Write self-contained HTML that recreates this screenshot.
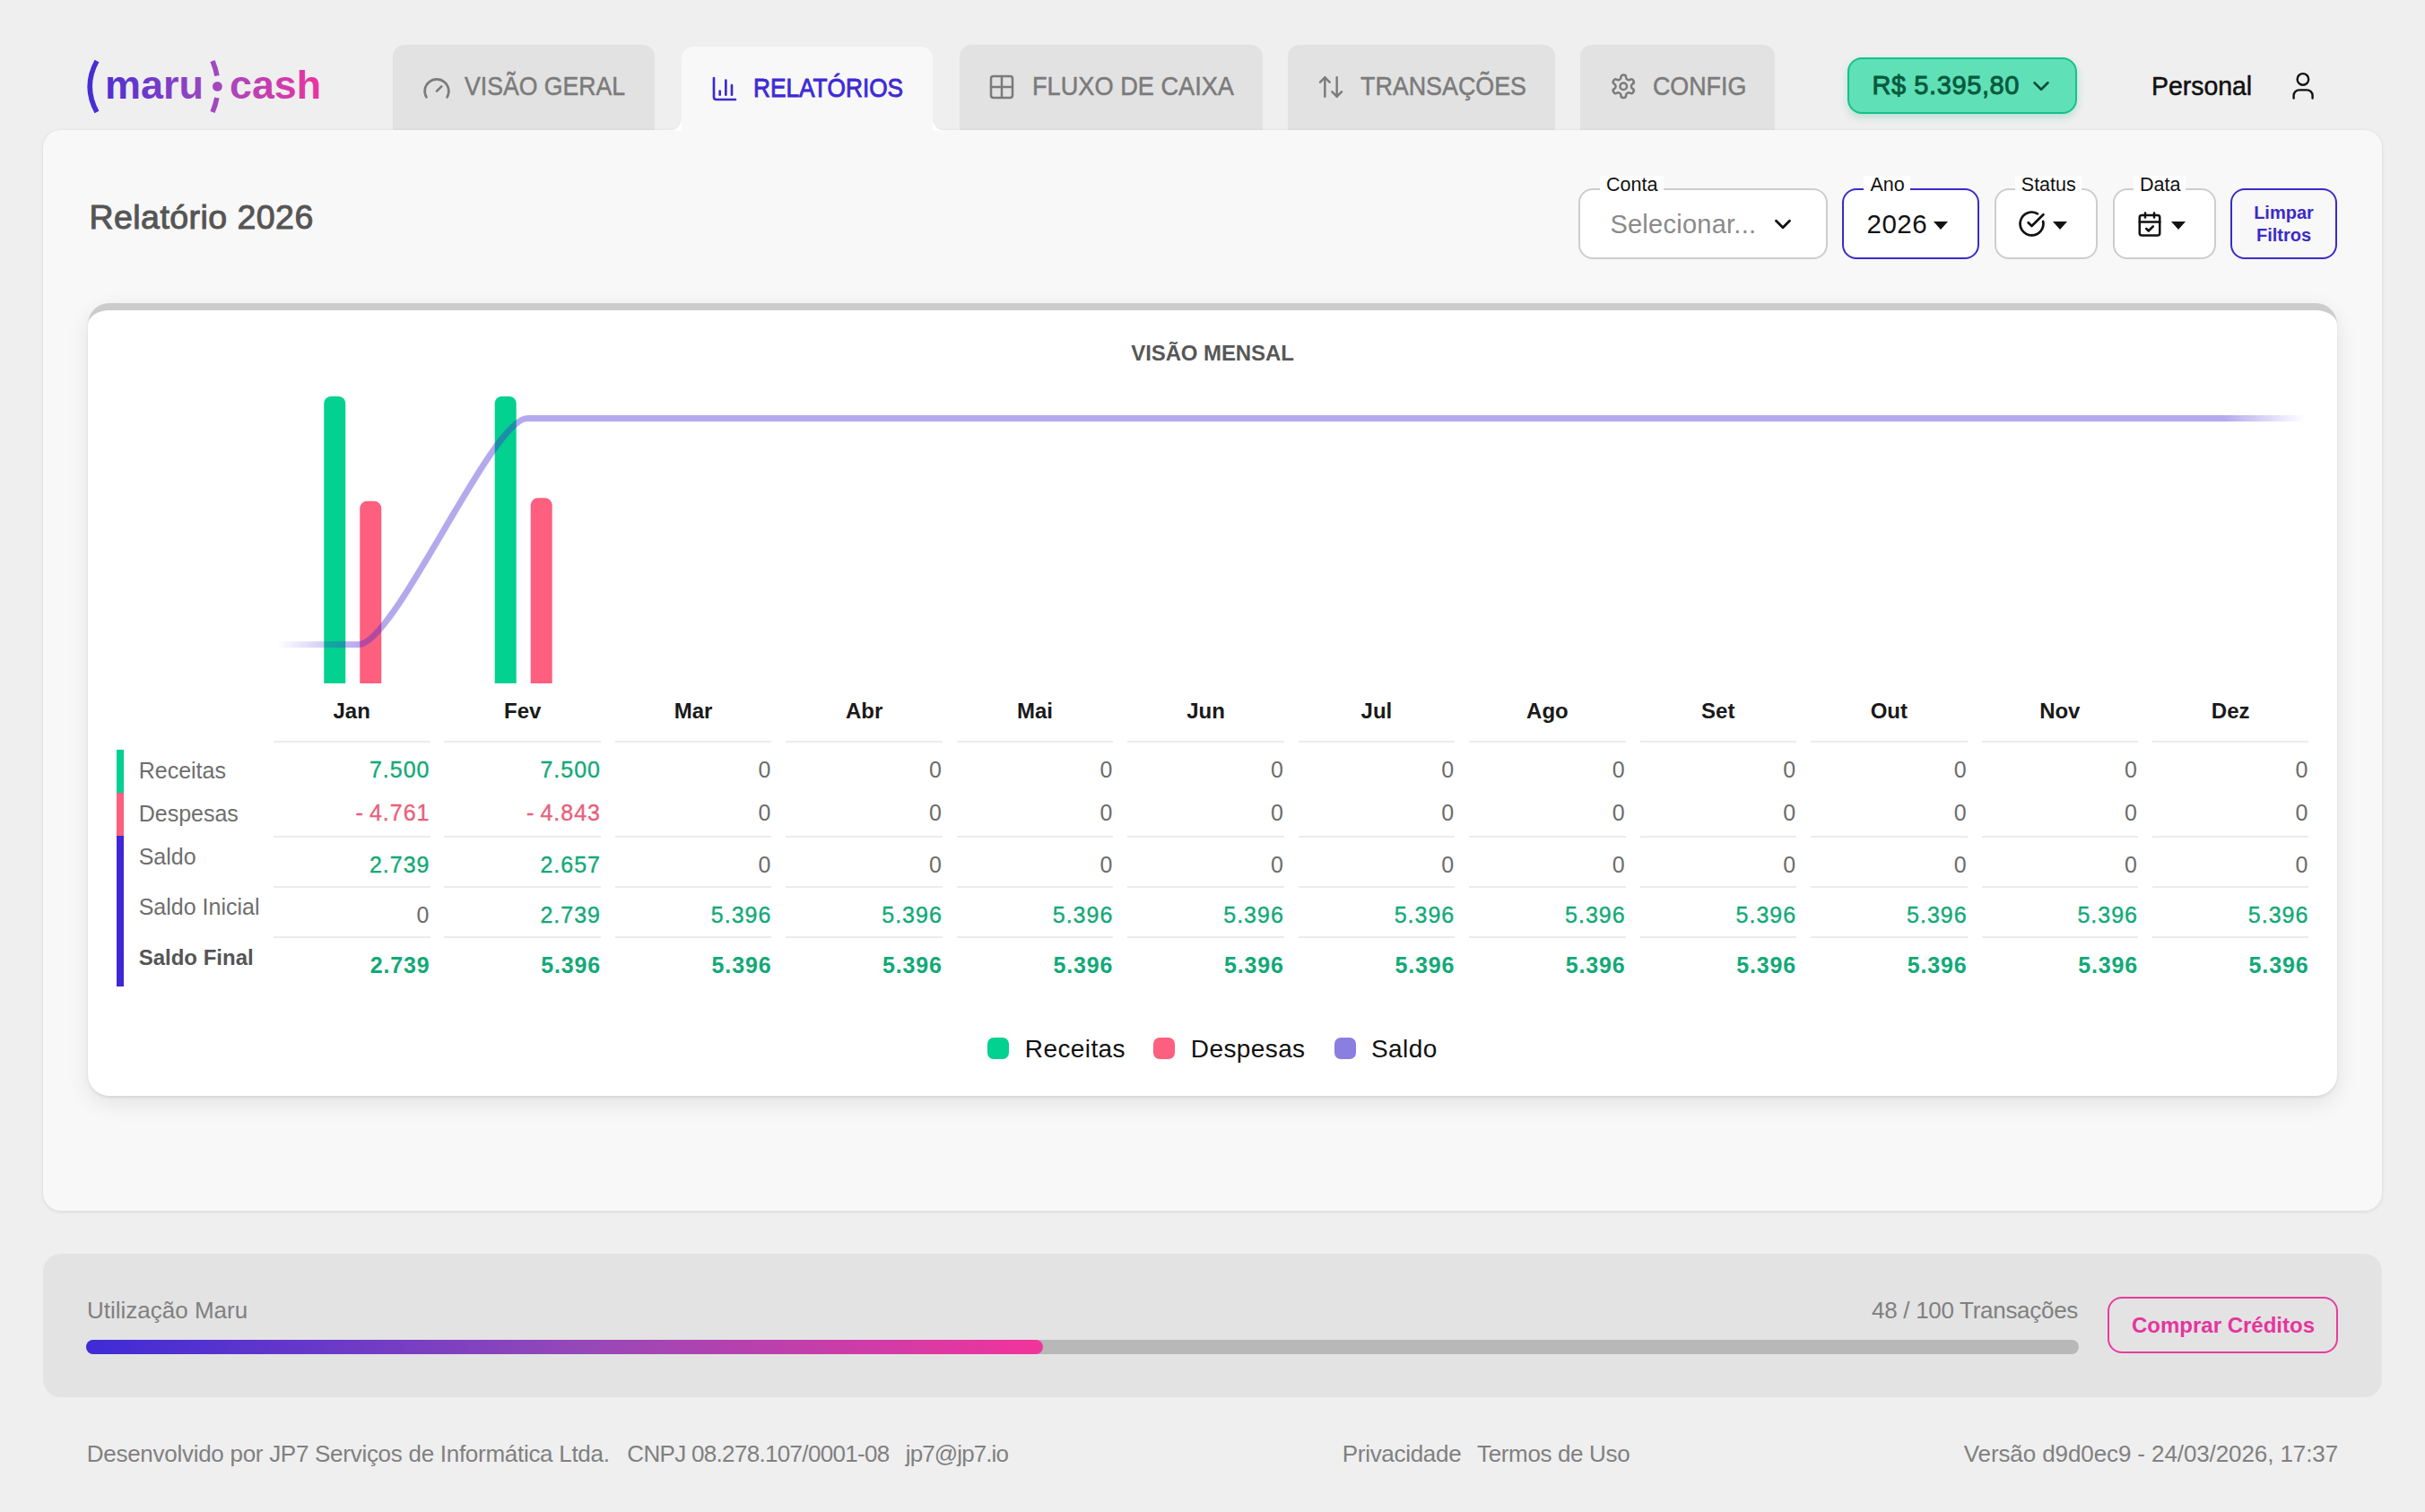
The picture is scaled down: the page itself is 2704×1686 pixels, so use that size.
<!DOCTYPE html>
<html><head><meta charset="utf-8"><title>maru cash - Relatório</title>
<style>
html,body{margin:0;padding:0;}
html,body{background:#efefef;overflow:hidden;}
#root{width:2704px;height:1686px;overflow:hidden;background:#efefef;position:relative;font-family:"Liberation Sans", sans-serif;transform-origin:0 0;}
.t{position:absolute;line-height:0;white-space:nowrap;}
svg{overflow:visible;}
</style></head><body><div id="root">

<div style="position:absolute;left:48px;top:145px;width:2608px;height:1205px;background:#f8f8f8;border-radius:20px;box-shadow:0 1px 4px rgba(0,0,0,0.10);z-index:1"></div>
<div style="position:absolute;left:438px;top:50px;width:292px;height:110px;background:#e2e2e2;border-radius:13px 13px 0 0;z-index:0"></div>
<div style="position:absolute;left:1070px;top:50px;width:338px;height:110px;background:#e2e2e2;border-radius:13px 13px 0 0;z-index:0"></div>
<div style="position:absolute;left:1436px;top:50px;width:298px;height:110px;background:#e2e2e2;border-radius:13px 13px 0 0;z-index:0"></div>
<div style="position:absolute;left:1762px;top:50px;width:217px;height:110px;background:#e2e2e2;border-radius:13px 13px 0 0;z-index:0"></div>
<div style="position:absolute;left:760px;top:52px;width:280px;height:120px;background:#f8f8f8;border-radius:13px 13px 0 0;z-index:2"></div>
<div style="position:absolute;left:746px;top:132px;width:14px;height:14px;z-index:2;background:radial-gradient(circle at 0 0, transparent 13.5px, #fff 14.5px)"></div>
<div style="position:absolute;left:1040px;top:132px;width:14px;height:14px;z-index:2;background:radial-gradient(circle at 100% 0, transparent 13.5px, #fff 14.5px)"></div>
<svg style="position:absolute;left:470.5px;top:82.5px;" width="32" height="32" viewBox="0 0 24 24"><g fill="none" stroke-linecap="round" stroke-linejoin="round" stroke="#7b7b7b" stroke-width="2"><path d="m12 14 4-4"/><path d="M3.34 19a10 10 0 1 1 17.32 0"/></g></svg>
<div class="t" style="left:518.0px;top:96.0px;font-size:29px;font-weight:400;color:#7b7b7b;letter-spacing:0px;transform:scaleX(0.918);transform-origin:0 0;-webkit-text-stroke:0.5px #7b7b7b;">VISÃO GERAL</div>
<svg style="position:absolute;left:791.5px;top:83px;z-index:3" width="32" height="32" viewBox="0 0 24 24"><g fill="none" stroke-linecap="round" stroke-linejoin="round" stroke="#3b2bcc" stroke-width="2"><path d="M3 3v16a2 2 0 0 0 2 2h16"/><path d="M18 17V9"/><path d="M13 17V5"/><path d="M8 17v-3"/></g></svg>
<div class="t" style="left:840.0px;top:98.0px;font-size:29px;font-weight:400;color:#3f2ad4;letter-spacing:0px;transform:scaleX(0.904);transform-origin:0 0;-webkit-text-stroke:0.9px #3f2ad4;z-index:3;">RELATÓRIOS</div>
<svg style="position:absolute;left:1100.8px;top:80.8px;" width="32" height="32" viewBox="0 0 24 24"><g fill="none" stroke-linecap="round" stroke-linejoin="round" stroke="#7b7b7b" stroke-width="1.9"><rect width="18" height="18" x="3" y="3" rx="2"/><path d="M3 12h18"/><path d="M12 3v18"/></g></svg>
<div class="t" style="left:1150.5px;top:96.0px;font-size:29px;font-weight:400;color:#7b7b7b;letter-spacing:0px;transform:scaleX(0.937);transform-origin:0 0;-webkit-text-stroke:0.5px #7b7b7b;">FLUXO DE CAIXA</div>
<svg style="position:absolute;left:1467.8px;top:81px;" width="32" height="32" viewBox="0 0 24 24"><g fill="none" stroke-linecap="round" stroke-linejoin="round" stroke="#7b7b7b" stroke-width="1.85"><path d="m21 16-4 4-4-4"/><path d="M17 20V4"/><path d="m3 8 4-4 4 4"/><path d="M7 4v16"/></g></svg>
<div class="t" style="left:1516.6px;top:96.0px;font-size:29px;font-weight:400;color:#7b7b7b;letter-spacing:0px;transform:scaleX(0.926);transform-origin:0 0;-webkit-text-stroke:0.5px #7b7b7b;">TRANSAÇÕES</div>
<svg style="position:absolute;left:1794.5px;top:81.3px;" width="30.5" height="30.5" viewBox="0 0 24 24"><g fill="none" stroke-linecap="round" stroke-linejoin="round" stroke="#7b7b7b" stroke-width="2"><path d="M12.22 2h-.44a2 2 0 0 0-2 2v.18a2 2 0 0 1-1 1.73l-.43.25a2 2 0 0 1-2 0l-.15-.08a2 2 0 0 0-2.73.73l-.22.38a2 2 0 0 0 .73 2.73l.15.1a2 2 0 0 1 1 1.72v.51a2 2 0 0 1-1 1.74l-.15.09a2 2 0 0 0-.73 2.73l.22.38a2 2 0 0 0 2.73.73l.15-.08a2 2 0 0 1 2 0l.43.25a2 2 0 0 1 1 1.73V20a2 2 0 0 0 2 2h.44a2 2 0 0 0 2-2v-.18a2 2 0 0 1 1-1.73l.43-.25a2 2 0 0 1 2 0l.15.08a2 2 0 0 0 2.73-.73l.22-.39a2 2 0 0 0-.73-2.73l-.15-.08a2 2 0 0 1-1-1.74v-.5a2 2 0 0 1 1-1.74l.15-.09a2 2 0 0 0 .73-2.73l-.22-.38a2 2 0 0 0-2.73-.73l-.15.08a2 2 0 0 1-2 0l-.43-.25a2 2 0 0 1-1-1.73V4a2 2 0 0 0-2-2z"/><circle cx="12" cy="12" r="3"/></g></svg>
<div class="t" style="left:1842.5px;top:96.0px;font-size:29px;font-weight:400;color:#7b7b7b;letter-spacing:0px;transform:scaleX(0.925);transform-origin:0 0;-webkit-text-stroke:0.5px #7b7b7b;">CONFIG</div>
<div style="position:absolute;left:90px;top:60px;width:280px;height:75px;z-index:0">
<svg width="280" height="75" viewBox="0 0 280 75" style="position:absolute;left:0;top:0">
<defs><linearGradient id="lg" x1="0" y1="0" x2="280" y2="0" gradientUnits="userSpaceOnUse">
<stop offset="0" stop-color="#3d2bd6"/><stop offset="0.55" stop-color="#a449bd"/><stop offset="1" stop-color="#f2309b"/></linearGradient></defs>
<path d="M18.00 8.00 Q2.40 36.50 18.00 65.00" fill="none" stroke="url(#lg)" stroke-width="5.6"/>
<path d="M147.00 8.00 Q150.48 16.27 151.94 24.53" fill="none" stroke="url(#lg)" stroke-width="5.6"/>
<path d="M151.84 49.04 Q150.36 57.02 147.00 65.00" fill="none" stroke="url(#lg)" stroke-width="5.6"/>
<circle cx="152.4" cy="36.400000000000006" r="5.4" fill="url(#lg)"/>
<text x="27" y="50" font-family="Liberation Sans" font-weight="700" font-size="44" fill="url(#lg)" textLength="110" lengthAdjust="spacingAndGlyphs">maru</text>
<text x="166" y="50" font-family="Liberation Sans" font-weight="700" font-size="44" fill="url(#lg)" textLength="102" lengthAdjust="spacingAndGlyphs">cash</text>
</svg></div>
<div style="position:absolute;left:2060px;top:64px;width:256px;height:63px;box-sizing:border-box;background:#5fe0b6;border:2px solid #17c08a;border-radius:16px;box-shadow:0 4px 8px rgba(16,185,129,0.25);z-index:0"></div>
<div class="t" style="left:2087.4px;top:95.0px;font-size:29px;font-weight:400;color:#065a3e;letter-spacing:0.6px;-webkit-text-stroke:0.9px #065a3e;">R$ 5.395,80</div>
<svg style="position:absolute;left:2261px;top:81px;" width="30" height="30" viewBox="0 0 24 24"><g fill="none" stroke-linecap="round" stroke-linejoin="round" stroke="#064b36" stroke-width="2"><path d="m6 9 6 6 6-6"/></g></svg>
<div class="t" style="left:2399.0px;top:95.5px;font-size:29px;font-weight:400;color:#111;letter-spacing:0px;transform:scaleX(0.98);transform-origin:0 0;-webkit-text-stroke:0.5px #111;">Personal</div>
<svg style="position:absolute;left:0;top:0;overflow:visible" width="1" height="1"><g fill="none" stroke="#111" stroke-width="2.4" stroke-linecap="round"><circle cx="2567.9" cy="88.4" r="6.3"/><path d="M2557.6 109.6 V106.5 A6.2 6.2 0 0 1 2563.8 100.4 H2572.4 A6.2 6.2 0 0 1 2578.6 106.5 V109.6"/></g></svg>
<div class="t" style="left:99.5px;top:242.0px;font-size:37.5px;font-weight:400;color:#555555;letter-spacing:0.45px;-webkit-text-stroke:1.0px #555555;z-index:3;">Relatório 2026</div>
<div style="position:absolute;left:1760px;top:210px;width:278px;height:79px;box-sizing:border-box;background:#fff;border:2px solid #cdcdcd;border-radius:16px;z-index:3"></div>
<div style="position:absolute;left:1784px;top:196px;width:71px;height:18px;background:#fff;z-index:4"></div>
<div class="t" style="left:1791.0px;top:206.2px;font-size:21.5px;font-weight:400;color:#111;letter-spacing:0px;z-index:5">Conta</div>
<div class="t" style="left:1795.4px;top:250.0px;font-size:29px;font-weight:400;color:#8a8a8a;letter-spacing:0.25px;z-index:5">Selecionar...</div>
<svg style="position:absolute;left:1973px;top:235px;z-index:5" width="30" height="30" viewBox="0 0 24 24"><g fill="none" stroke-linecap="round" stroke-linejoin="round" stroke="#111" stroke-width="2.3"><path d="m6 9 6 6 6-6"/></g></svg>
<div style="position:absolute;left:2054px;top:210px;width:153px;height:79px;box-sizing:border-box;background:#fff;border:2px solid #3b2bc8;border-radius:16px;z-index:3"></div>
<div style="position:absolute;left:2078px;top:196px;width:52px;height:18px;background:#fff;z-index:4"></div>
<div class="t" style="left:2085.4px;top:206.2px;font-size:21.5px;font-weight:400;color:#111;letter-spacing:0px;z-index:5">Ano</div>
<div class="t" style="left:2081.5px;top:249.8px;font-size:29.5px;font-weight:400;color:#111;letter-spacing:0.5px;z-index:5">2026</div>
<svg style="position:absolute;left:2156px;top:247px;z-index:5" width="16" height="9" viewBox="0 0 16 9"><path d="M0 0h16L8 9z" fill="#111"/></svg>
<div style="position:absolute;left:2224px;top:210px;width:115px;height:79px;box-sizing:border-box;background:#fff;border:2px solid #cdcdcd;border-radius:16px;z-index:3"></div>
<div style="position:absolute;left:2247px;top:196px;width:74px;height:18px;background:#fff;z-index:4"></div>
<div class="t" style="left:2253.8px;top:206.2px;font-size:21.5px;font-weight:400;color:#111;letter-spacing:0px;z-index:5">Status</div>
<svg style="position:absolute;left:2249.5px;top:234.2px;z-index:5" width="31" height="31" viewBox="0 0 24 24"><g fill="none" stroke-linecap="round" stroke-linejoin="round" stroke="#111" stroke-width="2.1"><path d="M21.801 10A10 10 0 1 1 17 3.335"/><path d="m9 11 3 3L22 4"/></g></svg>
<svg style="position:absolute;left:2289px;top:247px;z-index:5" width="16" height="9" viewBox="0 0 16 9"><path d="M0 0h16L8 9z" fill="#111"/></svg>
<div style="position:absolute;left:2356px;top:210px;width:115px;height:79px;box-sizing:border-box;background:#fff;border:2px solid #cdcdcd;border-radius:16px;z-index:3"></div>
<div style="position:absolute;left:2379px;top:196px;width:58px;height:18px;background:#fff;z-index:4"></div>
<div class="t" style="left:2386.0px;top:206.2px;font-size:21.5px;font-weight:400;color:#111;letter-spacing:0px;z-index:5">Data</div>
<svg style="position:absolute;left:2382px;top:234.7px;z-index:5" width="30" height="30" viewBox="0 0 24 24"><g fill="none" stroke-linecap="round" stroke-linejoin="round" stroke="#111" stroke-width="2"><path d="M8 2v4"/><path d="M16 2v4"/><rect width="18" height="18" x="3" y="4" rx="2"/><path d="M3 10h18"/><path d="m9 16 2 2 4-4"/></g></svg>
<svg style="position:absolute;left:2421px;top:247px;z-index:5" width="16" height="9" viewBox="0 0 16 9"><path d="M0 0h16L8 9z" fill="#111"/></svg>
<div style="position:absolute;left:2487px;top:210px;width:119px;height:79px;box-sizing:border-box;background:transparent;border:2px solid #3b2bc8;border-radius:16px;z-index:3"></div>
<div class="t" style="left:1046.5px;width:3000px;text-align:center;top:236.8px;font-size:20px;font-weight:700;color:#3b2bc8;letter-spacing:0px;z-index:5">Limpar</div>
<div class="t" style="left:1046.5px;width:3000px;text-align:center;top:261.8px;font-size:20px;font-weight:700;color:#3b2bc8;letter-spacing:0px;z-index:5">Filtros</div>
<div style="position:absolute;left:98px;top:338px;width:2508px;height:884px;box-sizing:border-box;background:#fff;border-top:8px solid #cccccc;border-radius:24px;box-shadow:0 2px 3px rgba(0,0,0,0.08), 0 8px 26px rgba(0,0,0,0.09);z-index:3"></div>
<div class="t" style="left:-148.0px;width:3000px;text-align:center;top:393.7px;font-size:24px;font-weight:700;color:#575757;letter-spacing:-0.1px;z-index:5">VISÃO MENSAL</div>
<svg style="position:absolute;left:0;top:0;z-index:5" width="2704" height="1686" viewBox="0 0 2704 1686"><path d="M361.25 762 V450.00 a8 8 0 0 1 8 -8 h8 a8 8 0 0 1 8 8 V762 z" fill="#02d18f"/><path d="M401.25 762 V566.86 a8 8 0 0 1 8 -8 h8 a8 8 0 0 1 8 8 V762 z" fill="#fd5f7e"/><path d="M551.70 762 V450.00 a8 8 0 0 1 8 -8 h8 a8 8 0 0 1 8 8 V762 z" fill="#02d18f"/><path d="M591.70 762 V563.37 a8 8 0 0 1 8 -8 h8 a8 8 0 0 1 8 8 V762 z" fill="#fd5f7e"/><defs><linearGradient id="lineg" x1="309" y1="0" x2="2570" y2="0" gradientUnits="userSpaceOnUse">
<stop offset="0" stop-color="#4628d2" stop-opacity="0"/><stop offset="0.04" stop-color="#4628d2" stop-opacity="0.4"/>
<stop offset="0.96" stop-color="#4628d2" stop-opacity="0.4"/><stop offset="1" stop-color="#4628d2" stop-opacity="0"/></linearGradient></defs>
<path d="M309 718.7 L400.00 718.7 C440.00 718.7 548.00 466.6 588.00 466.6 L2570 466.6" fill="none" stroke="url(#lineg)" stroke-width="7" stroke-linecap="butt"/></svg>
<div class="t" style="left:-1107.8px;width:3000px;text-align:center;top:793.3px;font-size:24px;font-weight:700;color:#1a1a1a;letter-spacing:0px;z-index:5">Jan</div>
<div class="t" style="left:-917.3px;width:3000px;text-align:center;top:793.3px;font-size:24px;font-weight:700;color:#1a1a1a;letter-spacing:0px;z-index:5">Fev</div>
<div class="t" style="left:-726.9px;width:3000px;text-align:center;top:793.3px;font-size:24px;font-weight:700;color:#1a1a1a;letter-spacing:0px;z-index:5">Mar</div>
<div class="t" style="left:-536.4px;width:3000px;text-align:center;top:793.3px;font-size:24px;font-weight:700;color:#1a1a1a;letter-spacing:0px;z-index:5">Abr</div>
<div class="t" style="left:-346.0px;width:3000px;text-align:center;top:793.3px;font-size:24px;font-weight:700;color:#1a1a1a;letter-spacing:0px;z-index:5">Mai</div>
<div class="t" style="left:-155.5px;width:3000px;text-align:center;top:793.3px;font-size:24px;font-weight:700;color:#1a1a1a;letter-spacing:0px;z-index:5">Jun</div>
<div class="t" style="left:34.9px;width:3000px;text-align:center;top:793.3px;font-size:24px;font-weight:700;color:#1a1a1a;letter-spacing:0px;z-index:5">Jul</div>
<div class="t" style="left:225.4px;width:3000px;text-align:center;top:793.3px;font-size:24px;font-weight:700;color:#1a1a1a;letter-spacing:0px;z-index:5">Ago</div>
<div class="t" style="left:415.8px;width:3000px;text-align:center;top:793.3px;font-size:24px;font-weight:700;color:#1a1a1a;letter-spacing:0px;z-index:5">Set</div>
<div class="t" style="left:606.3px;width:3000px;text-align:center;top:793.3px;font-size:24px;font-weight:700;color:#1a1a1a;letter-spacing:0px;z-index:5">Out</div>
<div class="t" style="left:796.8px;width:3000px;text-align:center;top:793.3px;font-size:24px;font-weight:700;color:#1a1a1a;letter-spacing:0px;z-index:5">Nov</div>
<div class="t" style="left:987.2px;width:3000px;text-align:center;top:793.3px;font-size:24px;font-weight:700;color:#1a1a1a;letter-spacing:0px;z-index:5">Dez</div>
<div style="position:absolute;left:305.0px;top:825.7px;width:174.5px;height:2px;background:#ececec;z-index:5"></div>
<div style="position:absolute;left:495.4px;top:825.7px;width:174.5px;height:2px;background:#ececec;z-index:5"></div>
<div style="position:absolute;left:685.9px;top:825.7px;width:174.5px;height:2px;background:#ececec;z-index:5"></div>
<div style="position:absolute;left:876.3px;top:825.7px;width:174.5px;height:2px;background:#ececec;z-index:5"></div>
<div style="position:absolute;left:1066.8px;top:825.7px;width:174.5px;height:2px;background:#ececec;z-index:5"></div>
<div style="position:absolute;left:1257.2px;top:825.7px;width:174.5px;height:2px;background:#ececec;z-index:5"></div>
<div style="position:absolute;left:1447.7px;top:825.7px;width:174.5px;height:2px;background:#ececec;z-index:5"></div>
<div style="position:absolute;left:1638.1px;top:825.7px;width:174.5px;height:2px;background:#ececec;z-index:5"></div>
<div style="position:absolute;left:1828.6px;top:825.7px;width:174.5px;height:2px;background:#ececec;z-index:5"></div>
<div style="position:absolute;left:2019.0px;top:825.7px;width:174.5px;height:2px;background:#ececec;z-index:5"></div>
<div style="position:absolute;left:2209.5px;top:825.7px;width:174.5px;height:2px;background:#ececec;z-index:5"></div>
<div style="position:absolute;left:2399.9px;top:825.7px;width:174.5px;height:2px;background:#ececec;z-index:5"></div>
<div style="position:absolute;left:305.0px;top:932px;width:174.5px;height:2px;background:#ececec;z-index:5"></div>
<div style="position:absolute;left:495.4px;top:932px;width:174.5px;height:2px;background:#ececec;z-index:5"></div>
<div style="position:absolute;left:685.9px;top:932px;width:174.5px;height:2px;background:#ececec;z-index:5"></div>
<div style="position:absolute;left:876.3px;top:932px;width:174.5px;height:2px;background:#ececec;z-index:5"></div>
<div style="position:absolute;left:1066.8px;top:932px;width:174.5px;height:2px;background:#ececec;z-index:5"></div>
<div style="position:absolute;left:1257.2px;top:932px;width:174.5px;height:2px;background:#ececec;z-index:5"></div>
<div style="position:absolute;left:1447.7px;top:932px;width:174.5px;height:2px;background:#ececec;z-index:5"></div>
<div style="position:absolute;left:1638.1px;top:932px;width:174.5px;height:2px;background:#ececec;z-index:5"></div>
<div style="position:absolute;left:1828.6px;top:932px;width:174.5px;height:2px;background:#ececec;z-index:5"></div>
<div style="position:absolute;left:2019.0px;top:932px;width:174.5px;height:2px;background:#ececec;z-index:5"></div>
<div style="position:absolute;left:2209.5px;top:932px;width:174.5px;height:2px;background:#ececec;z-index:5"></div>
<div style="position:absolute;left:2399.9px;top:932px;width:174.5px;height:2px;background:#ececec;z-index:5"></div>
<div style="position:absolute;left:305.0px;top:988px;width:174.5px;height:2px;background:#ececec;z-index:5"></div>
<div style="position:absolute;left:495.4px;top:988px;width:174.5px;height:2px;background:#ececec;z-index:5"></div>
<div style="position:absolute;left:685.9px;top:988px;width:174.5px;height:2px;background:#ececec;z-index:5"></div>
<div style="position:absolute;left:876.3px;top:988px;width:174.5px;height:2px;background:#ececec;z-index:5"></div>
<div style="position:absolute;left:1066.8px;top:988px;width:174.5px;height:2px;background:#ececec;z-index:5"></div>
<div style="position:absolute;left:1257.2px;top:988px;width:174.5px;height:2px;background:#ececec;z-index:5"></div>
<div style="position:absolute;left:1447.7px;top:988px;width:174.5px;height:2px;background:#ececec;z-index:5"></div>
<div style="position:absolute;left:1638.1px;top:988px;width:174.5px;height:2px;background:#ececec;z-index:5"></div>
<div style="position:absolute;left:1828.6px;top:988px;width:174.5px;height:2px;background:#ececec;z-index:5"></div>
<div style="position:absolute;left:2019.0px;top:988px;width:174.5px;height:2px;background:#ececec;z-index:5"></div>
<div style="position:absolute;left:2209.5px;top:988px;width:174.5px;height:2px;background:#ececec;z-index:5"></div>
<div style="position:absolute;left:2399.9px;top:988px;width:174.5px;height:2px;background:#ececec;z-index:5"></div>
<div style="position:absolute;left:305.0px;top:1044.3px;width:174.5px;height:2px;background:#ececec;z-index:5"></div>
<div style="position:absolute;left:495.4px;top:1044.3px;width:174.5px;height:2px;background:#ececec;z-index:5"></div>
<div style="position:absolute;left:685.9px;top:1044.3px;width:174.5px;height:2px;background:#ececec;z-index:5"></div>
<div style="position:absolute;left:876.3px;top:1044.3px;width:174.5px;height:2px;background:#ececec;z-index:5"></div>
<div style="position:absolute;left:1066.8px;top:1044.3px;width:174.5px;height:2px;background:#ececec;z-index:5"></div>
<div style="position:absolute;left:1257.2px;top:1044.3px;width:174.5px;height:2px;background:#ececec;z-index:5"></div>
<div style="position:absolute;left:1447.7px;top:1044.3px;width:174.5px;height:2px;background:#ececec;z-index:5"></div>
<div style="position:absolute;left:1638.1px;top:1044.3px;width:174.5px;height:2px;background:#ececec;z-index:5"></div>
<div style="position:absolute;left:1828.6px;top:1044.3px;width:174.5px;height:2px;background:#ececec;z-index:5"></div>
<div style="position:absolute;left:2019.0px;top:1044.3px;width:174.5px;height:2px;background:#ececec;z-index:5"></div>
<div style="position:absolute;left:2209.5px;top:1044.3px;width:174.5px;height:2px;background:#ececec;z-index:5"></div>
<div style="position:absolute;left:2399.9px;top:1044.3px;width:174.5px;height:2px;background:#ececec;z-index:5"></div>
<div style="position:absolute;left:130px;top:836px;width:8px;height:48px;background:#02d18f;z-index:5"></div>
<div style="position:absolute;left:130px;top:884px;width:8px;height:48px;background:#fd5f7e;z-index:5"></div>
<div style="position:absolute;left:130px;top:932px;width:8px;height:168px;background:#3f26d6;z-index:5"></div>
<div class="t" style="left:154.7px;top:859.3px;font-size:25px;font-weight:400;color:#6e6e6e;letter-spacing:0px;z-index:5">Receitas</div>
<div class="t" style="left:154.7px;top:906.7px;font-size:25px;font-weight:400;color:#6e6e6e;letter-spacing:0px;z-index:5">Despesas</div>
<div class="t" style="left:154.7px;top:955.0px;font-size:25px;font-weight:400;color:#6e6e6e;letter-spacing:0px;z-index:5">Saldo</div>
<div class="t" style="left:154.7px;top:1011.3px;font-size:25px;font-weight:400;color:#6e6e6e;letter-spacing:0px;z-index:5">Saldo Inicial</div>
<div class="t" style="left:154.7px;top:1067.7px;font-size:24px;font-weight:700;color:#555;letter-spacing:0px;z-index:5">Saldo Final</div>
<div class="t" style="left:-1020.5px;width:1500px;text-align:right;top:858.3px;font-size:25px;font-weight:400;color:#12a978;letter-spacing:1.0px;-webkit-text-stroke:0.35px #12a978;z-index:5">7.500</div>
<div class="t" style="left:-830.0px;width:1500px;text-align:right;top:858.3px;font-size:25px;font-weight:400;color:#12a978;letter-spacing:1.0px;-webkit-text-stroke:0.35px #12a978;z-index:5">7.500</div>
<div class="t" style="left:-639.6px;width:1500px;text-align:right;top:858.3px;font-size:25px;font-weight:400;color:#6c6c6c;letter-spacing:1.0px;z-index:5">0</div>
<div class="t" style="left:-449.2px;width:1500px;text-align:right;top:858.3px;font-size:25px;font-weight:400;color:#6c6c6c;letter-spacing:1.0px;z-index:5">0</div>
<div class="t" style="left:-258.7px;width:1500px;text-align:right;top:858.3px;font-size:25px;font-weight:400;color:#6c6c6c;letter-spacing:1.0px;z-index:5">0</div>
<div class="t" style="left:-68.2px;width:1500px;text-align:right;top:858.3px;font-size:25px;font-weight:400;color:#6c6c6c;letter-spacing:1.0px;z-index:5">0</div>
<div class="t" style="left:122.2px;width:1500px;text-align:right;top:858.3px;font-size:25px;font-weight:400;color:#6c6c6c;letter-spacing:1.0px;z-index:5">0</div>
<div class="t" style="left:312.6px;width:1500px;text-align:right;top:858.3px;font-size:25px;font-weight:400;color:#6c6c6c;letter-spacing:1.0px;z-index:5">0</div>
<div class="t" style="left:503.1px;width:1500px;text-align:right;top:858.3px;font-size:25px;font-weight:400;color:#6c6c6c;letter-spacing:1.0px;z-index:5">0</div>
<div class="t" style="left:693.6px;width:1500px;text-align:right;top:858.3px;font-size:25px;font-weight:400;color:#6c6c6c;letter-spacing:1.0px;z-index:5">0</div>
<div class="t" style="left:884.0px;width:1500px;text-align:right;top:858.3px;font-size:25px;font-weight:400;color:#6c6c6c;letter-spacing:1.0px;z-index:5">0</div>
<div class="t" style="left:1074.4px;width:1500px;text-align:right;top:858.3px;font-size:25px;font-weight:400;color:#6c6c6c;letter-spacing:1.0px;z-index:5">0</div>
<div class="t" style="left:-1020.5px;width:1500px;text-align:right;top:905.8px;font-size:25px;font-weight:400;color:#e9607b;letter-spacing:1.0px;-webkit-text-stroke:0.35px #e9607b;z-index:5">-&#8201;4.761</div>
<div class="t" style="left:-830.0px;width:1500px;text-align:right;top:905.8px;font-size:25px;font-weight:400;color:#e9607b;letter-spacing:1.0px;-webkit-text-stroke:0.35px #e9607b;z-index:5">-&#8201;4.843</div>
<div class="t" style="left:-639.6px;width:1500px;text-align:right;top:905.8px;font-size:25px;font-weight:400;color:#6c6c6c;letter-spacing:1.0px;z-index:5">0</div>
<div class="t" style="left:-449.2px;width:1500px;text-align:right;top:905.8px;font-size:25px;font-weight:400;color:#6c6c6c;letter-spacing:1.0px;z-index:5">0</div>
<div class="t" style="left:-258.7px;width:1500px;text-align:right;top:905.8px;font-size:25px;font-weight:400;color:#6c6c6c;letter-spacing:1.0px;z-index:5">0</div>
<div class="t" style="left:-68.2px;width:1500px;text-align:right;top:905.8px;font-size:25px;font-weight:400;color:#6c6c6c;letter-spacing:1.0px;z-index:5">0</div>
<div class="t" style="left:122.2px;width:1500px;text-align:right;top:905.8px;font-size:25px;font-weight:400;color:#6c6c6c;letter-spacing:1.0px;z-index:5">0</div>
<div class="t" style="left:312.6px;width:1500px;text-align:right;top:905.8px;font-size:25px;font-weight:400;color:#6c6c6c;letter-spacing:1.0px;z-index:5">0</div>
<div class="t" style="left:503.1px;width:1500px;text-align:right;top:905.8px;font-size:25px;font-weight:400;color:#6c6c6c;letter-spacing:1.0px;z-index:5">0</div>
<div class="t" style="left:693.6px;width:1500px;text-align:right;top:905.8px;font-size:25px;font-weight:400;color:#6c6c6c;letter-spacing:1.0px;z-index:5">0</div>
<div class="t" style="left:884.0px;width:1500px;text-align:right;top:905.8px;font-size:25px;font-weight:400;color:#6c6c6c;letter-spacing:1.0px;z-index:5">0</div>
<div class="t" style="left:1074.4px;width:1500px;text-align:right;top:905.8px;font-size:25px;font-weight:400;color:#6c6c6c;letter-spacing:1.0px;z-index:5">0</div>
<div class="t" style="left:-1020.5px;width:1500px;text-align:right;top:963.6px;font-size:25px;font-weight:400;color:#12a978;letter-spacing:1.0px;-webkit-text-stroke:0.35px #12a978;z-index:5">2.739</div>
<div class="t" style="left:-830.0px;width:1500px;text-align:right;top:963.6px;font-size:25px;font-weight:400;color:#12a978;letter-spacing:1.0px;-webkit-text-stroke:0.35px #12a978;z-index:5">2.657</div>
<div class="t" style="left:-639.6px;width:1500px;text-align:right;top:963.6px;font-size:25px;font-weight:400;color:#6c6c6c;letter-spacing:1.0px;z-index:5">0</div>
<div class="t" style="left:-449.2px;width:1500px;text-align:right;top:963.6px;font-size:25px;font-weight:400;color:#6c6c6c;letter-spacing:1.0px;z-index:5">0</div>
<div class="t" style="left:-258.7px;width:1500px;text-align:right;top:963.6px;font-size:25px;font-weight:400;color:#6c6c6c;letter-spacing:1.0px;z-index:5">0</div>
<div class="t" style="left:-68.2px;width:1500px;text-align:right;top:963.6px;font-size:25px;font-weight:400;color:#6c6c6c;letter-spacing:1.0px;z-index:5">0</div>
<div class="t" style="left:122.2px;width:1500px;text-align:right;top:963.6px;font-size:25px;font-weight:400;color:#6c6c6c;letter-spacing:1.0px;z-index:5">0</div>
<div class="t" style="left:312.6px;width:1500px;text-align:right;top:963.6px;font-size:25px;font-weight:400;color:#6c6c6c;letter-spacing:1.0px;z-index:5">0</div>
<div class="t" style="left:503.1px;width:1500px;text-align:right;top:963.6px;font-size:25px;font-weight:400;color:#6c6c6c;letter-spacing:1.0px;z-index:5">0</div>
<div class="t" style="left:693.6px;width:1500px;text-align:right;top:963.6px;font-size:25px;font-weight:400;color:#6c6c6c;letter-spacing:1.0px;z-index:5">0</div>
<div class="t" style="left:884.0px;width:1500px;text-align:right;top:963.6px;font-size:25px;font-weight:400;color:#6c6c6c;letter-spacing:1.0px;z-index:5">0</div>
<div class="t" style="left:1074.4px;width:1500px;text-align:right;top:963.6px;font-size:25px;font-weight:400;color:#6c6c6c;letter-spacing:1.0px;z-index:5">0</div>
<div class="t" style="left:-1020.5px;width:1500px;text-align:right;top:1019.8px;font-size:25px;font-weight:400;color:#6c6c6c;letter-spacing:1.0px;z-index:5">0</div>
<div class="t" style="left:-830.0px;width:1500px;text-align:right;top:1019.8px;font-size:25px;font-weight:400;color:#12a978;letter-spacing:1.0px;-webkit-text-stroke:0.35px #12a978;z-index:5">2.739</div>
<div class="t" style="left:-639.6px;width:1500px;text-align:right;top:1019.8px;font-size:25px;font-weight:400;color:#12a978;letter-spacing:1.0px;-webkit-text-stroke:0.35px #12a978;z-index:5">5.396</div>
<div class="t" style="left:-449.2px;width:1500px;text-align:right;top:1019.8px;font-size:25px;font-weight:400;color:#12a978;letter-spacing:1.0px;-webkit-text-stroke:0.35px #12a978;z-index:5">5.396</div>
<div class="t" style="left:-258.7px;width:1500px;text-align:right;top:1019.8px;font-size:25px;font-weight:400;color:#12a978;letter-spacing:1.0px;-webkit-text-stroke:0.35px #12a978;z-index:5">5.396</div>
<div class="t" style="left:-68.2px;width:1500px;text-align:right;top:1019.8px;font-size:25px;font-weight:400;color:#12a978;letter-spacing:1.0px;-webkit-text-stroke:0.35px #12a978;z-index:5">5.396</div>
<div class="t" style="left:122.2px;width:1500px;text-align:right;top:1019.8px;font-size:25px;font-weight:400;color:#12a978;letter-spacing:1.0px;-webkit-text-stroke:0.35px #12a978;z-index:5">5.396</div>
<div class="t" style="left:312.6px;width:1500px;text-align:right;top:1019.8px;font-size:25px;font-weight:400;color:#12a978;letter-spacing:1.0px;-webkit-text-stroke:0.35px #12a978;z-index:5">5.396</div>
<div class="t" style="left:503.1px;width:1500px;text-align:right;top:1019.8px;font-size:25px;font-weight:400;color:#12a978;letter-spacing:1.0px;-webkit-text-stroke:0.35px #12a978;z-index:5">5.396</div>
<div class="t" style="left:693.6px;width:1500px;text-align:right;top:1019.8px;font-size:25px;font-weight:400;color:#12a978;letter-spacing:1.0px;-webkit-text-stroke:0.35px #12a978;z-index:5">5.396</div>
<div class="t" style="left:884.0px;width:1500px;text-align:right;top:1019.8px;font-size:25px;font-weight:400;color:#12a978;letter-spacing:1.0px;-webkit-text-stroke:0.35px #12a978;z-index:5">5.396</div>
<div class="t" style="left:1074.4px;width:1500px;text-align:right;top:1019.8px;font-size:25px;font-weight:400;color:#12a978;letter-spacing:1.0px;-webkit-text-stroke:0.35px #12a978;z-index:5">5.396</div>
<div class="t" style="left:-1020.5px;width:1500px;text-align:right;top:1076.0px;font-size:25px;font-weight:700;color:#12a978;letter-spacing:0.85px;z-index:5">2.739</div>
<div class="t" style="left:-830.0px;width:1500px;text-align:right;top:1076.0px;font-size:25px;font-weight:700;color:#12a978;letter-spacing:0.85px;z-index:5">5.396</div>
<div class="t" style="left:-639.6px;width:1500px;text-align:right;top:1076.0px;font-size:25px;font-weight:700;color:#12a978;letter-spacing:0.85px;z-index:5">5.396</div>
<div class="t" style="left:-449.2px;width:1500px;text-align:right;top:1076.0px;font-size:25px;font-weight:700;color:#12a978;letter-spacing:0.85px;z-index:5">5.396</div>
<div class="t" style="left:-258.7px;width:1500px;text-align:right;top:1076.0px;font-size:25px;font-weight:700;color:#12a978;letter-spacing:0.85px;z-index:5">5.396</div>
<div class="t" style="left:-68.2px;width:1500px;text-align:right;top:1076.0px;font-size:25px;font-weight:700;color:#12a978;letter-spacing:0.85px;z-index:5">5.396</div>
<div class="t" style="left:122.2px;width:1500px;text-align:right;top:1076.0px;font-size:25px;font-weight:700;color:#12a978;letter-spacing:0.85px;z-index:5">5.396</div>
<div class="t" style="left:312.6px;width:1500px;text-align:right;top:1076.0px;font-size:25px;font-weight:700;color:#12a978;letter-spacing:0.85px;z-index:5">5.396</div>
<div class="t" style="left:503.1px;width:1500px;text-align:right;top:1076.0px;font-size:25px;font-weight:700;color:#12a978;letter-spacing:0.85px;z-index:5">5.396</div>
<div class="t" style="left:693.6px;width:1500px;text-align:right;top:1076.0px;font-size:25px;font-weight:700;color:#12a978;letter-spacing:0.85px;z-index:5">5.396</div>
<div class="t" style="left:884.0px;width:1500px;text-align:right;top:1076.0px;font-size:25px;font-weight:700;color:#12a978;letter-spacing:0.85px;z-index:5">5.396</div>
<div class="t" style="left:1074.4px;width:1500px;text-align:right;top:1076.0px;font-size:25px;font-weight:700;color:#12a978;letter-spacing:0.85px;z-index:5">5.396</div>
<div style="position:absolute;left:1101px;top:1157px;width:24px;height:24px;background:#02d18f;border-radius:7px;z-index:5"></div>
<div class="t" style="left:1142.8px;top:1169.8px;font-size:28px;font-weight:400;color:#111;letter-spacing:0.4px;z-index:5">Receitas</div>
<div style="position:absolute;left:1286px;top:1157px;width:24px;height:24px;background:#fd5f7e;border-radius:7px;z-index:5"></div>
<div class="t" style="left:1327.8px;top:1169.8px;font-size:28px;font-weight:400;color:#111;letter-spacing:0.4px;z-index:5">Despesas</div>
<div style="position:absolute;left:1488px;top:1157px;width:24px;height:24px;background:#8a7ee0;border-radius:7px;z-index:5"></div>
<div class="t" style="left:1529.0px;top:1169.8px;font-size:28px;font-weight:400;color:#111;letter-spacing:0.4px;z-index:5">Saldo</div>
<div style="position:absolute;left:48px;top:1398px;width:2608px;height:160px;background:#e3e3e3;border-radius:20px;"></div>
<div class="t" style="left:97.0px;top:1461.2px;font-size:26px;font-weight:400;color:#808080;letter-spacing:0px;">Utilização Maru</div>
<div class="t" style="left:817.0px;width:1500px;text-align:right;top:1461.3px;font-size:26px;font-weight:400;color:#808080;letter-spacing:-0.3px;">48 / 100 Transações</div>
<div style="position:absolute;left:96px;top:1494px;width:2222px;height:16px;background:#b8b8b8;border-radius:8px"></div>
<div style="position:absolute;left:96px;top:1494px;width:1067px;height:16px;background:linear-gradient(90deg,#3f2bd6,#9648b8 52%,#f2349c);border-radius:8px"></div>
<div style="position:absolute;left:2350px;top:1446px;width:257px;height:63px;box-sizing:border-box;border:2px solid #e53d9f;border-radius:16px"></div>
<div class="t" style="left:979.0px;width:3000px;text-align:center;top:1477.7px;font-size:24px;font-weight:700;color:#e5359e;letter-spacing:0px;">Comprar Créditos</div>
<div class="t" style="left:96.8px;top:1621.0px;font-size:26px;font-weight:400;color:#808080;letter-spacing:-0.28px;">Desenvolvido por JP7 Serviços de Informática Ltda.</div>
<div class="t" style="left:699.3px;top:1621.0px;font-size:26px;font-weight:400;color:#808080;letter-spacing:-0.68px;">CNPJ 08.278.107/0001-08</div>
<div class="t" style="left:1009.8px;top:1621.0px;font-size:26px;font-weight:400;color:#808080;letter-spacing:-0.9px;">jp7@jp7.io</div>
<div class="t" style="left:1496.8px;top:1621.0px;font-size:26px;font-weight:400;color:#808080;letter-spacing:-0.3px;">Privacidade</div>
<div class="t" style="left:1647.0px;top:1621.0px;font-size:26px;font-weight:400;color:#808080;letter-spacing:-0.35px;">Termos de Uso</div>
<div class="t" style="left:1107.0px;width:1500px;text-align:right;top:1621.0px;font-size:26px;font-weight:400;color:#808080;letter-spacing:-0.1px;">Versão d9d0ec9 - 24/03/2026, 17:37</div>
</div><script>(function(){var w=window.innerWidth||document.documentElement.clientWidth;var s=w/2704;if(w>0&&Math.abs(s-1)>0.002){document.getElementById("root").style.transform="scale("+s+")";}})();</script></body></html>
